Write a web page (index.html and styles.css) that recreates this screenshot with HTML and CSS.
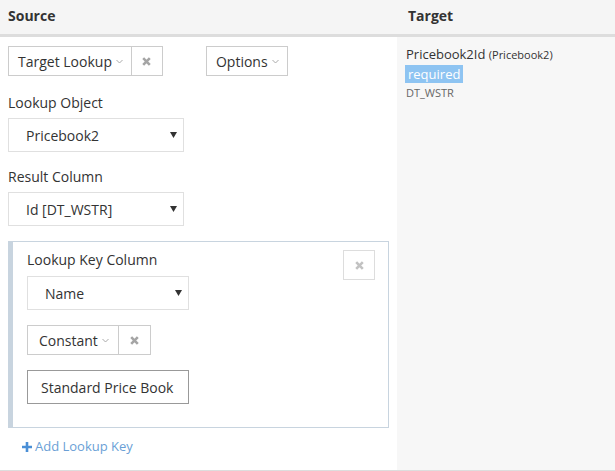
FILE: index.html
```html
<!DOCTYPE html>
<html lang="en">
<head>
  <meta charset="UTF-8" />
  <title>Lookup Mapping</title>
  <link rel="stylesheet" href="styles.css">
</head>
<body>
  <div class="mapping">
    <div class="head">
      <div class="head-src">Source</div>
      <div class="head-tgt">Target</div>
    </div>
    <div class="row">
      <div class="source">
        <div class="toolbar">
          <div class="btn-group">
            <span class="btn btn-lookup">Target Lookup <svg class="caret" width="7" height="5" viewBox="0 0 7 5"><path d="M0.5 1 L3.5 4 L6.5 1" fill="none" stroke="#aaa" stroke-width="1"/></svg></span>
            <span class="btn btn-x"><svg width="9" height="9" viewBox="0 0 9 9"><path d="M1.2 1.2 L7.8 7.8 M7.8 1.2 L1.2 7.8" stroke="#a5a5a5" stroke-width="2.6"/></svg></span>
          </div>
          <span class="btn btn-options">Options <svg class="caret" width="7" height="5" viewBox="0 0 7 5"><path d="M0.5 1 L3.5 4 L6.5 1" fill="none" stroke="#aaa" stroke-width="1"/></svg></span>
        </div>

        <label class="field-label first">Lookup Object</label>
        <div class="select">Pricebook2<svg class="arrow" width="7" height="6" viewBox="0 0 7 6"><path d="M0 0 H7 L3.5 6 Z" fill="#333"/></svg></div>

        <label class="field-label">Result Column</label>
        <div class="select">Id [DT_WSTR]<svg class="arrow" width="7" height="6" viewBox="0 0 7 6"><path d="M0 0 H7 L3.5 6 Z" fill="#333"/></svg></div>

        <div class="key-panel">
          <span class="btn btn-remove"><svg width="9" height="9" viewBox="0 0 9 9"><path d="M1.2 1.2 L7.8 7.8 M7.8 1.2 L1.2 7.8" stroke="#c2c2c2" stroke-width="2.6"/></svg></span>
          <label class="field-label key-label">Lookup Key Column</label>
          <div class="select">Name<svg class="arrow" width="7" height="6" viewBox="0 0 7 6"><path d="M0 0 H7 L3.5 6 Z" fill="#333"/></svg></div>
          <div class="btn-group const-group">
            <span class="btn">Constant <svg class="caret" width="7" height="5" viewBox="0 0 7 5"><path d="M0.5 1 L3.5 4 L6.5 1" fill="none" stroke="#aaa" stroke-width="1"/></svg></span>
            <span class="btn btn-x"><svg width="9" height="9" viewBox="0 0 9 9"><path d="M1.2 1.2 L7.8 7.8 M7.8 1.2 L1.2 7.8" stroke="#a5a5a5" stroke-width="2.6"/></svg></span>
          </div>
          <div class="text-input">Standard Price Book</div>
        </div>

        <a class="add-key" href="#"><svg class="plus" width="10" height="10" viewBox="0 0 10 10"><path d="M5 0 V10 M0 5 H10" stroke="#4a8fd6" stroke-width="2.6"/></svg>Add Lookup Key</a>
      </div>
      <div class="target">
        <div class="tgt-name">Pricebook2Id <small>(Pricebook2)</small></div>
        <span class="badge">required</span>
        <div class="tgt-type">DT_WSTR</div>
      </div>
    </div>
  </div>
</body>
</html>
```

FILE: styles.css
```css
body {
  margin: 0;
  font-family: "Open Sans", "Noto Sans", sans-serif;
  font-size: 14px;
  line-height: 19px;
  color: #333;
  background: #fff;
}

.mapping {
  width: 615px;
  height: 471px;
  display: flex;
  flex-direction: column;
}

.head {
  display: flex;
  background: #f5f5f5;
  border-bottom: 3px solid #ddd;
  height: 34px;
  font-weight: bold;
  color: #333;
}

.head-src {
  width: 397px;
  padding: 6px 0 0 8px;
  box-sizing: border-box;
}

.head-tgt {
  padding: 6px 0 0 11px;
}

.row {
  flex: 1;
  display: flex;
  border-bottom: 1px solid #ddd;
}

.source {
  width: 397px;
  padding: 9px 0 0 8px;
  box-sizing: border-box;
}

.target {
  flex: 1;
  background: #f7f7f7;
  padding: 8px 0 0 9px;
}

.toolbar {
  display: flex;
  gap: 43px;
}

.btn-group {
  display: flex;
}

.btn {
  display: inline-flex;
  align-items: center;
  height: 30px;
  box-sizing: border-box;
  padding: 0 10px;
  border: 1px solid #ccc;
  background: #fff;
  color: #333;
}

.btn-group .btn + .btn {
  border-left: none;
}

.btn-lookup {
  padding: 0 8px 0 9px;
}

.caret {
  margin-left: 4px;
}

.btn-x {
  width: 31px;
  padding: 0;
  justify-content: center;
}

.btn-options {
  padding: 0 8px 0 9px;
}

.field-label {
  display: block;
  margin: 15px 0 6px;
}

.field-label.first {
  margin-top: 17px;
}

.select {
  position: relative;
  width: 176px;
  height: 34px;
  box-sizing: border-box;
  border: 1px solid #e0e0e0;
  padding: 7px 0 0 17px;
}

.arrow {
  position: absolute;
  right: 6px;
  top: 13px;
}

.key-panel {
  position: relative;
  width: 381px;
  margin-top: 15px;
  border: 1px solid #c8d4df;
  border-left: 5px solid #c8d4df;
  box-sizing: border-box;
  padding: 8px 0 23px 14px;
}

.key-label {
  margin: 0 0 7px;
}

.key-panel .select {
  width: 162px;
}

.btn-remove {
  position: absolute;
  right: 13px;
  top: 8px;
  width: 32px;
  height: 30px;
  padding: 0;
  justify-content: center;
  border-color: #ddd;
}

.const-group {
  margin-top: 15px;
}

.const-group .btn:first-child {
  padding: 0 9px 0 11px;
}

.const-group .btn-x {
  width: 32px;
}

.text-input {
  width: 162px;
  height: 34px;
  box-sizing: border-box;
  margin-top: 15px;
  border: 1px solid #999;
  padding: 7px 0 0 13px;
}

.add-key {
  display: inline-flex;
  align-items: center;
  gap: 3px;
  margin: 9px 0 0 14px;
  color: #6a9fd6;
  text-decoration: none;
  font-size: 13px;
}

.tgt-name {
  font-size: 13px;
  line-height: 18px;
}

.tgt-name small {
  font-size: 11px;
}

.badge {
  display: inline-block;
  margin-left: -1px;
  background: #8ec4f2;
  color: #fff;
  font-size: 13px;
  padding: 0 3px 0 3px;
  line-height: 18px;
}

.tgt-type {
  font-size: 11px;
  line-height: 14px;
  color: #666;
  margin-top: 3px;
}
```
